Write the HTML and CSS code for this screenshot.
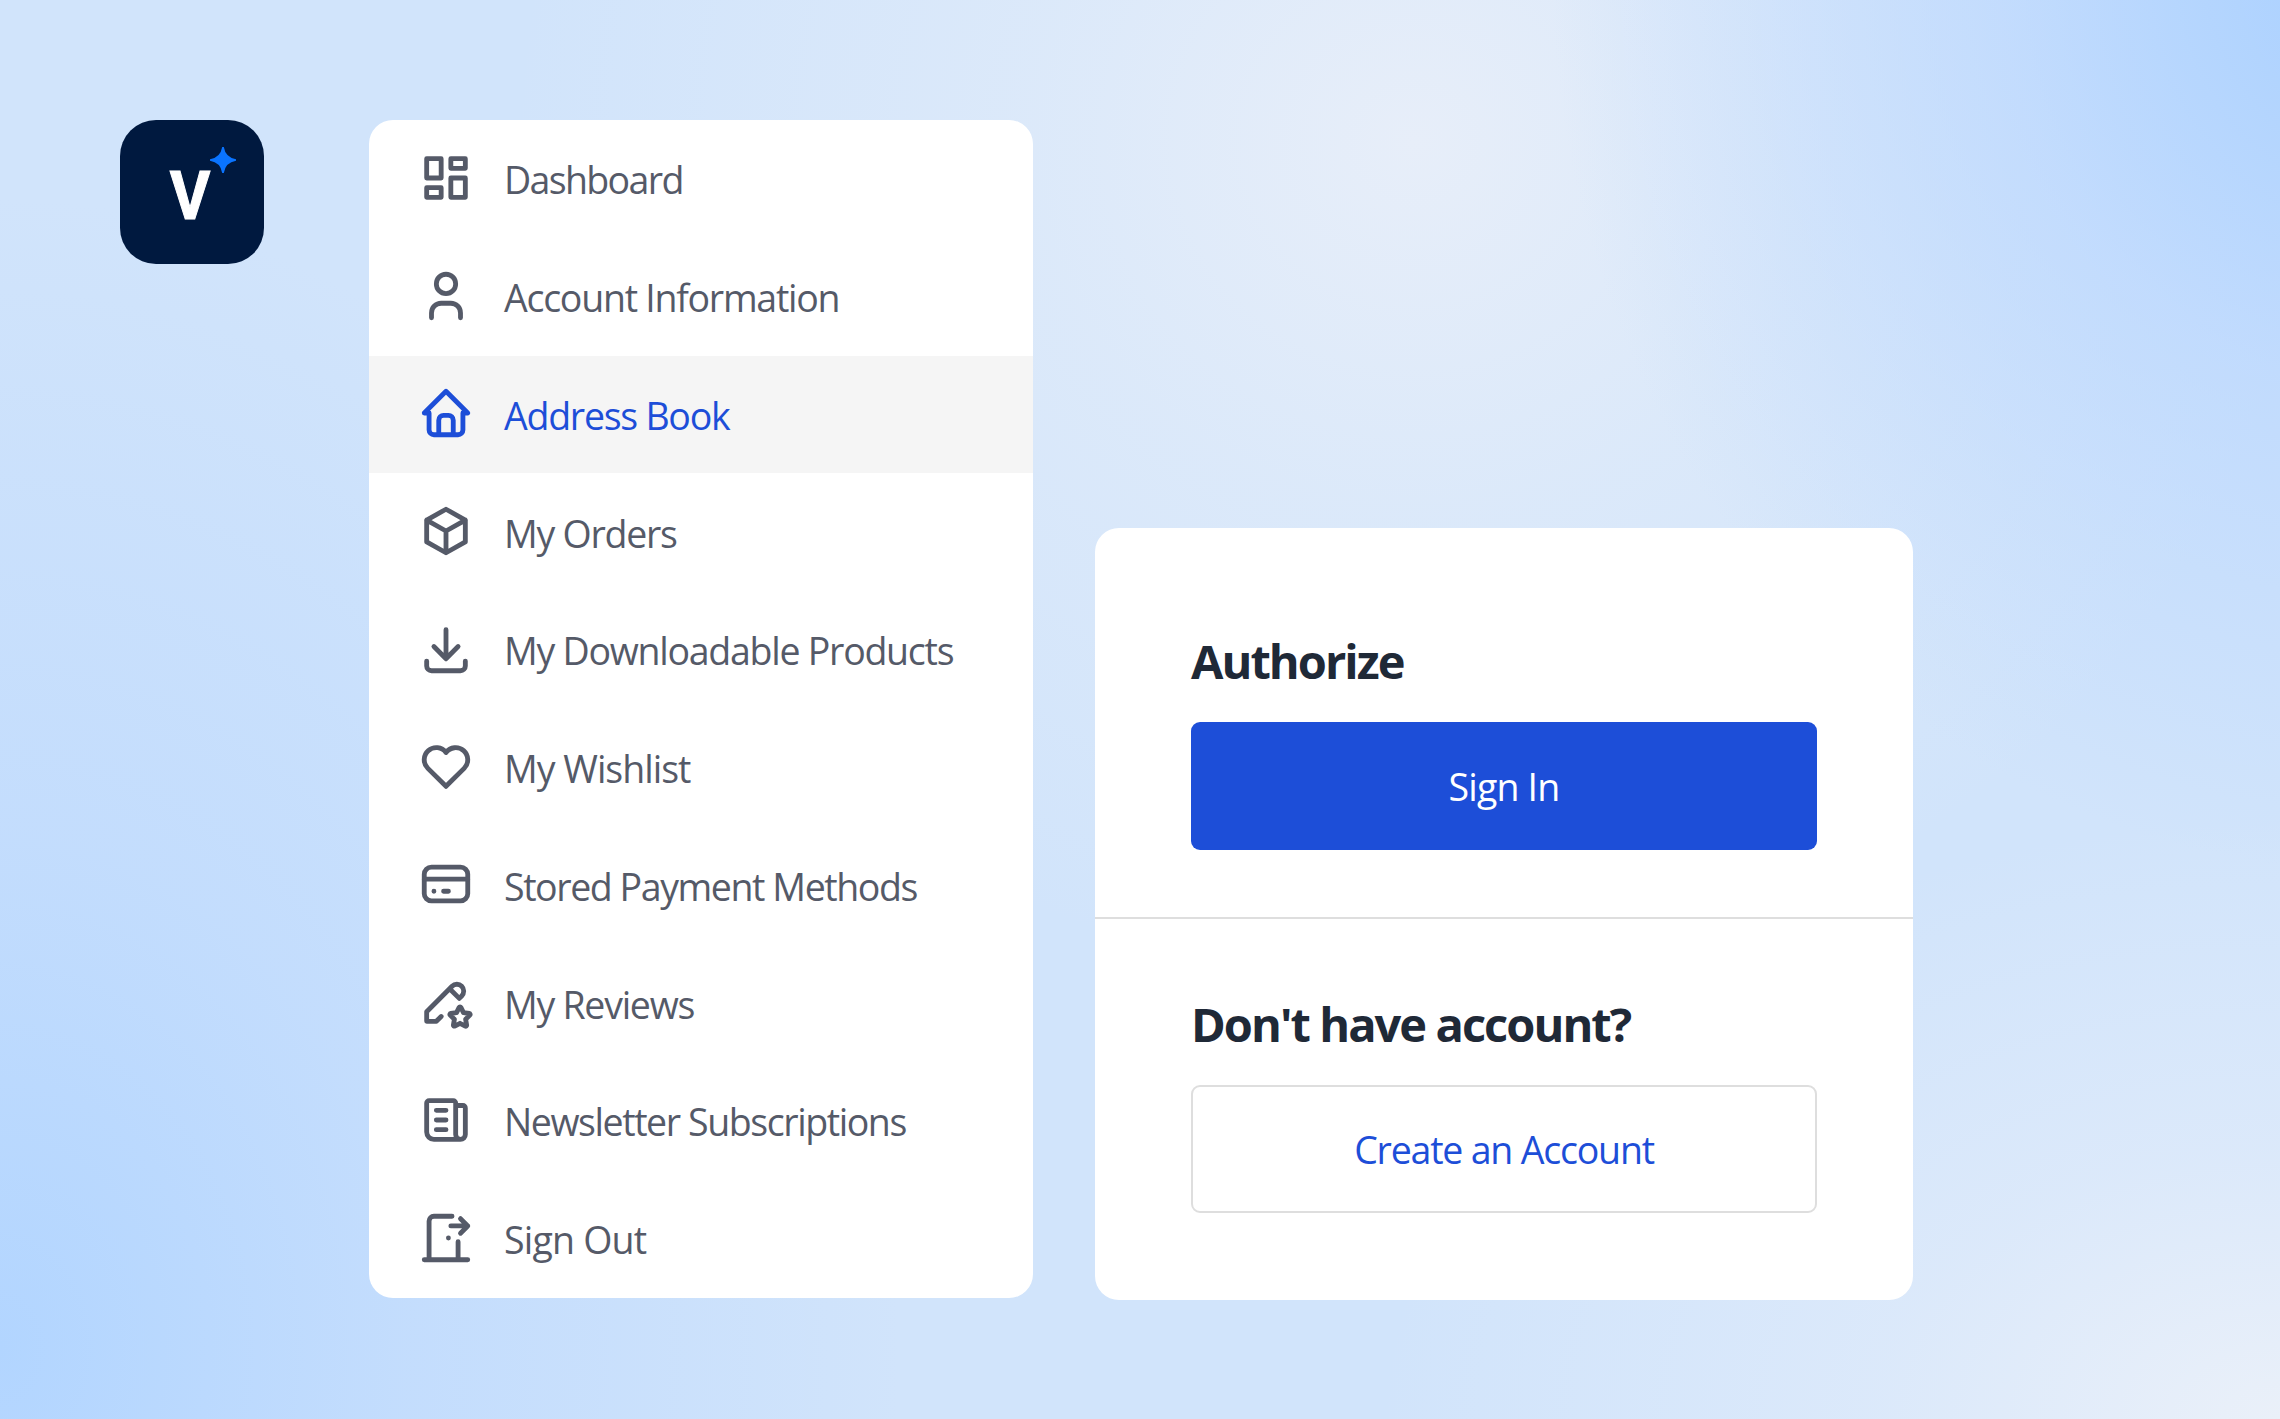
FILE: index.html
```
<!DOCTYPE html>
<html lang="en">
<head>
    <meta charset="UTF-8">
    <title>My Account</title>
    <link rel="stylesheet" href="styles.css">
</head>
<body>
    <div class="page">
        <div class="logo">
            <span class="logo-letter">V</span>
            <svg class="logo-star" viewBox="0 0 26 26"><path d="M12.200 0h1.600Q15.500 10.500 26 12.200v1.600Q15.500 15.500 13.800 26h-1.600Q10.500 15.500 0 13.800v-1.600Q10.500 10.500 12.200 0Z"/></svg>
        </div>

        <nav class="menu">
            <a href="#" class="menu-item">
                <svg class="icon" viewBox="0 0 24 24"><path d="M4 4h6v8H4zM4 16h6v4H4zM14 12h6v8h-6zM14 4h6v4h-6z"/></svg>
                <span class="tightest">Dashboard</span>
            </a>
            <a href="#" class="menu-item">
                <svg class="icon" viewBox="0 0 24 24"><circle cx="12" cy="7" r="4"/><path d="M6 21v-2a4 4 0 0 1 4-4h4a4 4 0 0 1 4 4v2"/></svg>
                <span class="tight">Account Information</span>
            </a>
            <a href="#" class="menu-item active">
                <svg class="icon" viewBox="0 0 24 24"><path d="M5 12H3l9-9 9 9h-2M5 12v7a2 2 0 0 0 2 2h10a2 2 0 0 0 2-2v-7M9 21v-6a2 2 0 0 1 2-2h2a2 2 0 0 1 2 2v6"/></svg>
                <span class="tight">Address Book</span>
            </a>
            <a href="#" class="menu-item">
                <svg class="icon" viewBox="0 0 24 24"><path d="M12 3l8 4.500v9L12 21l-8-4.500v-9zM12 12l8-4.500M12 12v9M12 12L4 7.500"/></svg>
                <span class="tight">My Orders</span>
            </a>
            <a href="#" class="menu-item">
                <svg class="icon" viewBox="0 0 24 24"><path d="M4 17v2a2 2 0 0 0 2 2h12a2 2 0 0 0 2-2v-2M7 11l5 5 5-5M12 4v12"/></svg>
                <span class="tight">My Downloadable Products</span>
            </a>
            <a href="#" class="menu-item">
                <svg class="icon" viewBox="0 0 24 24"><path d="M19.500 12.572L12 20l-7.500-7.428A5 5 0 1 1 12 6.006a5 5 0 1 1 7.500 6.572"/></svg>
                <span>My Wishlist</span>
            </a>
            <a href="#" class="menu-item">
                <svg class="icon" viewBox="0 0 24 24"><rect x="3" y="5" width="18" height="14" rx="3"/><path d="M3 10h18M7 15h.01M11 15h2"/></svg>
                <span class="tighter">Stored Payment Methods</span>
            </a>
            <a href="#" class="menu-item">
                <svg class="icon" viewBox="0 0 24 24"><path d="M10 18l-2 2H4v-4L14.500 5.500a2.828 2.828 0 1 1 4 4l-1 1M13.500 6.500l4 4"/><path d="M17.800 20.817l-2.172 1.138a.392.392 0 0 1-.568-.41l.415-2.411-1.757-1.707a.389.389 0 0 1 .217-.665l2.428-.352 1.086-2.193a.392.392 0 0 1 .702 0l1.086 2.193 2.428.352a.39.39 0 0 1 .217.665l-1.757 1.707.414 2.410a.39.39 0 0 1-.567.411z"/></svg>
                <span class="tight">My Reviews</span>
            </a>
            <a href="#" class="menu-item">
                <svg class="icon" viewBox="0 0 24 24"><path d="M16 6h3a1 1 0 0 1 1 1v11a2 2 0 0 1-4 0V5a1 1 0 0 0-1-1H5a1 1 0 0 0-1 1v12a3 3 0 0 0 3 3h11M8 8h4M8 12h4M8 16h4"/></svg>
                <span class="tighter">Newsletter Subscriptions</span>
            </a>
            <a href="#" class="menu-item">
                <svg class="icon" viewBox="0 0 24 24"><path d="M13 12v.01M3 21h18M5 21V5a2 2 0 0 1 2-2h7.500M17 13.500V21M14 7h7M18 4l3 3-3 3"/></svg>
                <span class="loose">Sign Out</span>
            </a>
        </nav>

        <div class="card">
            <div class="card-section">
                <h2>Authorize</h2>
                <button class="btn btn-primary loose">Sign In</button>
            </div>
            <div class="card-section">
                <h2>Don't have account?</h2>
                <button class="btn btn-outline">Create an Account</button>
            </div>
        </div>
    </div>
</body>
</html>
```
FILE: styles.css
```
* { box-sizing: border-box; }
body {
    margin: 0;
    font-family: "Open Sans", "Noto Sans", sans-serif;
    background:
        radial-gradient(ellipse 820px 900px at 104% -2%, #a9d0ff 0%, rgba(184, 214, 255, 0.65) 45%, rgba(200, 223, 253, 0) 100%),
        radial-gradient(ellipse 900px 600px at 100% 100%, #eaf0f9 0%, rgba(226, 236, 250, 0.6) 45%, rgba(226, 236, 250, 0) 100%),
        radial-gradient(ellipse 900px 850px at 62% 10%, #e7eef9 0%, rgba(226, 236, 249, 0.6) 45%, rgba(220, 233, 250, 0) 100%),
        radial-gradient(ellipse 900px 1150px at 0% 95%, #b2d5ff 0%, rgba(188, 217, 254, 0.65) 45%, rgba(206, 227, 252, 0) 100%),
        #d1e4fb;
}
.page { display: flex; align-items: flex-start; height: 1419px; padding: 120px; }

.logo { position: relative; width: 144px; height: 144px; margin-right: 105px; border-radius: 36px; background: #00193f; text-align: center; }
.logo-letter { display: block; font: bold 67.500px/144px Roboto, sans-serif; color: white; -webkit-text-stroke: 1px white; transform: translate(-2px, 4px) scaleX(0.92); }
.logo-star { position: absolute; left: 90px; top: 27px; width: 26px; height: 26px; fill: #0a74ff; }

.menu { width: 664px; margin-right: 62px; border-radius: 24px; background: white; overflow: hidden; }
.menu-item { display: flex; align-items: center; height: 117.750px; padding-left: 48px; color: #555a68; font-size: 37.500px; letter-spacing: -1px; text-decoration: none; white-space: nowrap; }
.menu-item span { padding-top: 2px; }
.menu-item.active { background: #f5f5f5; color: #1d4ed8; }
.icon { width: 58px; height: 58px; margin: -2px 29px 0 0; fill: none; stroke: currentColor; stroke-width: 2; stroke-linecap: round; stroke-linejoin: round; }

.card { width: 818px; height: 772px; margin-top: 408px; border-radius: 24px; background: white; }
.card-section { padding: 97px 96px 67px; }
.card-section + .card-section { padding-top: 69px; border-top: 2px solid #dedede; }
h2 { margin: 0 0 25px; font-size: 47px; line-height: 72px; font-weight: bold; letter-spacing: -1.950px; color: #1f2937; white-space: nowrap; }
.btn { display: block; width: 626px; height: 128px; padding: 1px 0 0; border: 0; border-radius: 9px; font: 37.500px "Open Sans", "Noto Sans", sans-serif; letter-spacing: -1.200px; }
.btn-primary { background: #1d4ed8; color: white; }
.btn-outline { background: white; border: 2px solid #dedede; color: #1d4ed8; }

.loose { letter-spacing: -0.800px; }
.tight { letter-spacing: -1.260px; }
.tighter { letter-spacing: -1.420px; }
.tightest { letter-spacing: -1.650px; }
```
